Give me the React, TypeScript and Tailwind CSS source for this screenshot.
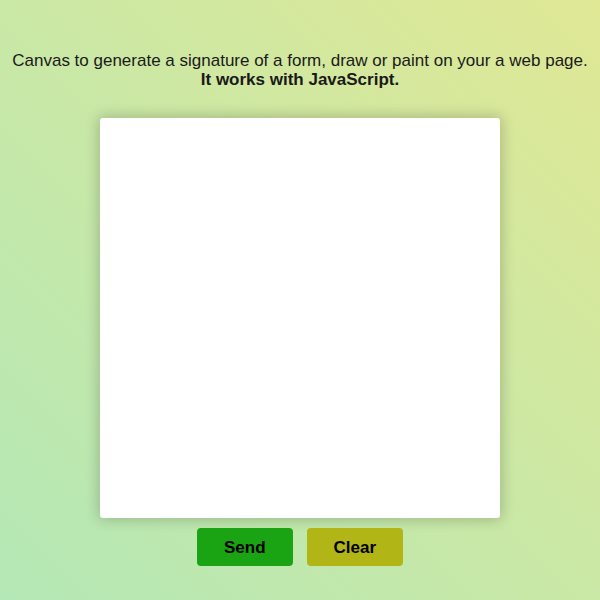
import React from "react";

const SignaturePad = () => {
  return (
    <div className="min-h-[600px] w-full bg-[linear-gradient(to_top_right,#b4e8b6,#e0e895)] font-['Liberation_Sans',Arial,sans-serif] text-[#1a1a1a]">
      <div className="flex flex-col items-center pt-[51px]">
        <p className="text-center text-[17px] leading-[19px]">
          Canvas to generate a signature of a form, draw or paint on your a web page.
          <br />
          <strong className="font-bold">It works with JavaScript.</strong>
        </p>
        <canvas
          width={400}
          height={400}
          className="mt-[29px] h-[400px] w-[400px] rounded-[3px] bg-white shadow-[0_0_14px_2px_rgba(0,0,0,0.2)]"
        />
        <div className="mt-[10px] flex gap-[14px]">
          <button className="rounded-[4px] bg-[#1aa312] px-[27px] pt-[10px] pb-[8px] text-[17px] leading-[20px] font-bold text-black">
            Send
          </button>
          <button className="rounded-[4px] bg-[#b1b515] px-[27px] pt-[10px] pb-[8px] text-[17px] leading-[20px] font-bold text-black">
            Clear
          </button>
        </div>
      </div>
    </div>
  );
};

export default function App() {
  return <SignaturePad />;
}
